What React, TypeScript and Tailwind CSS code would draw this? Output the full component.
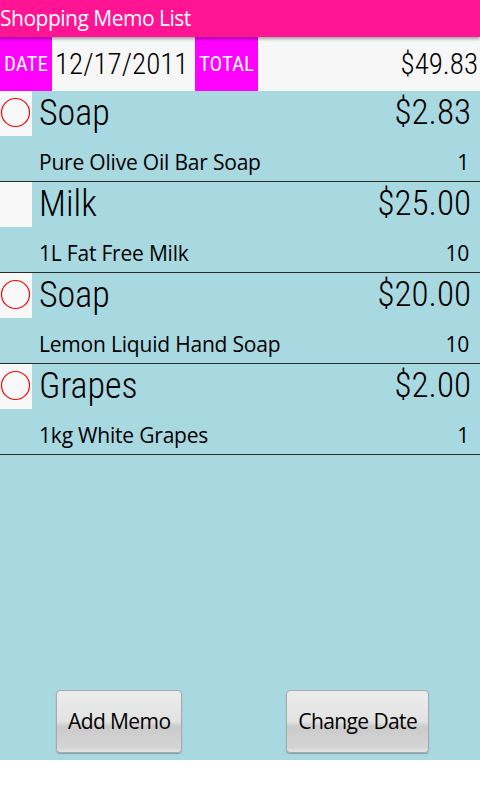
import React from "react";

type Item = { name: string; price: string; desc: string; qty: string; circle: boolean };

const items: Item[] = [
  { name: "Soap", price: "$2.83", desc: "Pure Olive Oil Bar Soap", qty: "1", circle: true },
  { name: "Milk", price: "$25.00", desc: "1L Fat Free Milk", qty: "10", circle: false },
  { name: "Soap", price: "$20.00", desc: "Lemon Liquid Hand Soap", qty: "10", circle: true },
  { name: "Grapes", price: "$2.00", desc: "1kg White Grapes", qty: "1", circle: true },
];

const COND = { fontFamily: "'Roboto Condensed', 'Open Sans', sans-serif" };

function Check({ circle }: { circle: boolean }) {
  return (
    <div className="w-[32px] h-[45px] bg-[#f8f8f8] shrink-0">
      {circle && (
        <svg width="32" height="45" viewBox="0 0 32 45">
          <circle cx="15.5" cy="21.5" r="14" fill="none" stroke="#ff0000" strokeWidth="1.2" />
        </svg>
      )}
    </div>
  );
}

function Row({ it }: { it: Item }) {
  return (
    <div className="flex flex-col h-[91px] border-b border-[#2a2a2a]">
      <div className="flex h-[45px] items-start">
        <Check circle={it.circle} />
        <div className="ml-[7px] pt-[4px] text-[36px] leading-[36px] font-[350] text-black" style={COND}>
          {it.name}
        </div>
        <div className="ml-auto pr-[9px] pt-[4px] text-[35px] leading-[35px] font-[350] text-black" style={COND}>
          {it.price}
        </div>
      </div>
      <div className="flex pt-[15px] pl-[39px] pr-[11px] text-[21px] leading-[22px] tracking-[-0.2px] text-black">
        <span>{it.desc}</span>
        <span className="ml-auto">{it.qty}</span>
      </div>
    </div>
  );
}

function Btn({ label, w }: { label: string; w: string }) {
  return (
    <button
      className={`${w} h-[63px] rounded-[4px] border border-[#a9a9a9] bg-[linear-gradient(to_bottom,#ececec_0%,#e2e2e2_50%,#cbcbcb_58%,#d4d4d4_92%,#e4e4e4_100%)] shadow-[0_1px_1px_rgba(0,0,0,0.25)] text-[21px] leading-none tracking-[-0.6px] text-black flex items-center justify-center`}
    >
      {label}
    </button>
  );
}

export default function App() {
  return (
    <div className="w-[480px] bg-white" style={{ fontFamily: "'Open Sans', 'Noto Sans', sans-serif" }}>
      <div className="h-[760px] flex flex-col bg-[#a8d8e0]">
        <div className="relative z-10 h-[37px] bg-[#ff1493] flex items-center shadow-[0_2px_3px_rgba(0,0,0,0.35)]">
          <span className="text-white text-[21px] leading-none tracking-[-0.5px] pb-[1px]">Shopping Memo List</span>
        </div>
        <div className="flex h-[54px] items-stretch">
          <div className="w-[52px] bg-[#ff00ff] flex items-center justify-center text-white text-[21px] leading-[21px]" style={COND}>
            DATE
          </div>
          <div className="w-[143px] bg-[#f7f7f7] flex items-center pl-[3px] text-[29px] leading-[29px] font-[350] text-black" style={COND}>
            12/17/2011
          </div>
          <div className="w-[63px] bg-[#ff00ff] flex items-center justify-center text-white text-[21px] leading-[21px]" style={COND}>
            TOTAL
          </div>
          <div className="flex-1 bg-[#f7f7f7] flex items-center justify-end pr-[2px] text-[29px] leading-[29px] font-[350] text-black" style={COND}>
            $49.83
          </div>
        </div>
        {items.map((it, i) => (
          <Row key={i} it={it} />
        ))}
        <div className="mt-auto mb-[7px] grid grid-cols-2 justify-items-center pr-[3px]">
          <Btn label="Add Memo" w="w-[126px]" />
          <Btn label="Change Date" w="w-[143px]" />
        </div>
      </div>
    </div>
  );
}
